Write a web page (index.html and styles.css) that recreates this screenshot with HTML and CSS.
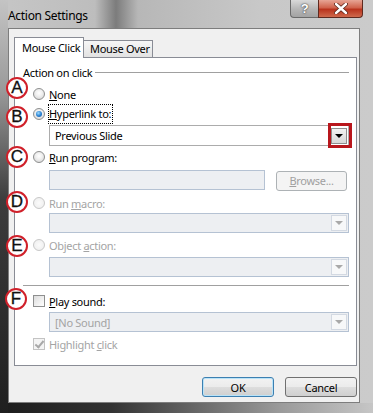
FILE: index.html
```html
<!DOCTYPE html>
<html lang="en">
<head>
  <meta charset="UTF-8">
  <title>Action Settings</title>
  <link rel="stylesheet" href="styles.css">
</head>
<body>
  <div class="window">
    <div class="titlebar">
      <span class="title">Action Settings</span>
      <div class="caption-btns">
        <span class="cap help">?</span>
        <span class="cap close">
          <svg width="14" height="11" viewBox="0 0 14 11"><path d="M2 1 L12 10 M12 1 L2 10" stroke="#5b2418" stroke-width="4" stroke-linecap="round"/><path d="M2 1 L12 10 M12 1 L2 10" stroke="#fff" stroke-width="2.4" stroke-linecap="round"/></svg>
        </span>
      </div>
    </div>

    <div class="client">
      <div class="tabs">
        <div class="tab active">Mouse Click</div>
        <div class="tab">Mouse Over</div>
      </div>

      <div class="panel">
        <div class="group-head"><span>Action on click</span><span class="rule"></span></div>

        <div class="row row-a"><span class="radio"></span><span><u>N</u>one</span></div>
        <div class="row row-b"><span class="radio checked"></span><span class="focus"><u>H</u>yperlink to:</span></div>
        <div class="field combo combo-main">
          <span>Previous Slide</span>
          <span class="drop"><i class="tri"></i></span>
        </div>

        <div class="row row-c"><span class="radio"></span><span><u>R</u>un program:</span></div>
        <div class="field-line">
          <div class="field text disabled"></div>
          <span class="btn browse"><u>B</u>rowse...</span>
        </div>

        <div class="row row-d disabled"><span class="radio"></span><span>Run <u>m</u>acro:</span></div>
        <div class="field combo disabled combo-macro"><span class="drop"><i class="tri"></i></span></div>

        <div class="row row-e disabled"><span class="radio"></span><span>Object <u>a</u>ction:</span></div>
        <div class="field combo disabled combo-obj"><span class="drop"><i class="tri"></i></span></div>

        <div class="sep"></div>

        <div class="row row-f"><span class="check"></span><span><u>P</u>lay sound:</span></div>
        <div class="field combo disabled combo-sound"><span>[No Sound]</span><span class="drop"><i class="tri"></i></span></div>

        <div class="row row-g disabled"><span class="check checked"></span><span>Highlight <u>c</u>lick</span></div>
      </div>

      <div class="buttons">
        <span class="btn default">OK</span>
        <span class="btn">Cancel</span>
      </div>
    </div>

    <span class="badge badge-a">A</span>
    <span class="badge badge-b">B</span>
    <span class="badge badge-c">C</span>
    <span class="badge badge-d">D</span>
    <span class="badge badge-e">E</span>
    <span class="badge badge-f">F</span>
    <span class="highlight-box"></span>
  </div>
</body>
</html>
```

FILE: styles.css
```css
body {
  margin: 0;
  font-family: "Noto Sans", "Open Sans", sans-serif;
  font-size: 11px;
  letter-spacing: -0.3px;
  color: #000;
}
.window {
  position: relative;
  width: 373px;
  height: 413px;
  overflow: hidden;
  background:
    linear-gradient(180deg, #c4c4c4 0, #9a9a9a 90px, #3c3c3c 200px, #1f1f1f 100%) left top / 8px 100% no-repeat,
    linear-gradient(90deg, #1c1c1c 0, #333 30%, #9a9a9a 75%, #c6c6c6 100%) left bottom / 100% 10px no-repeat,
    linear-gradient(90deg, #c6c6c6 0, #bdbdbd 95px, #7c7c7c 116px, #b7b7b7 138px, #c8c8c8 260px, #cbcbcb 100%);
}
.titlebar {
  height: 28px;
  display: flex;
  justify-content: space-between;
  align-items: flex-start;
}
.title {
  margin: 7px 0 0 8px;
  font-size: 12px;
}
.caption-btns {
  display: flex;
  margin-right: 10px;
}
.cap {
  height: 18px;
  display: flex;
  align-items: center;
  justify-content: center;
  box-sizing: border-box;
  border: 1px solid #6a6a6a;
  border-top: none;
}
.help {
  width: 28px;
  border-right: none;
  border-radius: 0 0 0 4px;
  background: linear-gradient(180deg, #d9d9d9, #b5b5b5 55%, #a3a3a3);
  color: #fff;
  font: bold 13px "Liberation Sans", sans-serif;
  text-shadow: 0 0 2px #444, 0 0 1px #444;
}
.close {
  width: 45px;
  border-color: #5f2a20;
  border-radius: 0 0 4px 0;
  background: linear-gradient(180deg, #e7a595, #d0634d 45%, #b9331d 55%, #cf6a4d);
}
.client {
  box-sizing: border-box;
  width: 352px;
  height: 375px;
  margin-left: 8px;
  padding: 8px 2px 0 5px;
  border: 1px solid #7d7d7d;
  background: #f0f0f0;
  display: flex;
  flex-direction: column;
}
.tabs {
  display: flex;
  align-items: flex-end;
  position: relative;
  z-index: 1;
}
.tab {
  box-sizing: border-box;
  height: 17px;
  padding: 0 0 0 6px;
  border: 1px solid #898c95;
  border-bottom: none;
  background: linear-gradient(180deg, #f6f6f6, #e2e2e2);
  line-height: 16px;
  white-space: nowrap;
}
.tab.active {
  height: 21px;
  width: 70px;
  padding: 2px 0 0 7px;
  background: #fff;
  margin-bottom: -1px;
}
.tab + .tab {
  margin-left: -1px;
  width: 70px;
}
.panel {
  box-sizing: border-box;
  height: 309px;
  border: 1px solid #898c95;
  background: #fff;
  padding: 6px 7px 0 8px;
}
.group-head {
  height: 16px;
  display: flex;
  align-items: center;
}
.group-head .rule {
  flex: 1;
  height: 1px;
  margin-left: 3px;
  background: #a0a0a0;
}
.row {
  height: 18px;
  display: flex;
  align-items: center;
  padding-left: 10px;
}
.row-a { margin-top: 5px; }
.row-b, .row-c { margin-top: 2px; }
.row-d { margin-top: 4px; }
.row-e { margin-top: 3px; }
.row-f { margin-top: 6px; }
.row-g { margin-top: 3px; }
.disabled { color: #a4a4a4; }
u { text-decoration: underline; text-underline-offset: 1px; }
.radio {
  width: 12px;
  height: 12px;
  box-sizing: border-box;
  border-radius: 50%;
  border: 1px solid #8e8f8f;
  background: radial-gradient(circle at 50% 40%, #fff 0, #f0f0f0 40%, #cfcfcf 100%);
  margin-right: 4px;
  display: flex;
  align-items: center;
  justify-content: center;
}
.radio.checked::after {
  content: "";
  width: 6px;
  height: 6px;
  border-radius: 50%;
  background: radial-gradient(circle at 40% 35%, #9fdcff 0, #2f86d5 50%, #124f9a 100%);
}
.row.disabled .radio {
  border-color: #c8c8c8;
  background: radial-gradient(circle, #fbfbfb, #ececec);
}
.focus {
  outline: 1px dotted #000;
  outline-offset: 0;
  padding: 1px 1px 2px 0;
}
.check {
  width: 12px;
  height: 12px;
  box-sizing: border-box;
  border: 1px solid #8e8f8f;
  background: linear-gradient(135deg, #dcdcdc, #fff);
  margin-right: 4px;
  display: flex;
  align-items: center;
  justify-content: center;
}
.check.checked {
  border-color: #c3c3c3;
  background: #f4f4f4;
}
.check.checked::after {
  content: "";
  width: 3px;
  height: 7px;
  margin-top: -2px;
  border: solid #a8a8a8;
  border-width: 0 2px 2px 0;
  transform: rotate(40deg);
}
.field {
  box-sizing: border-box;
  height: 20px;
  margin-left: 26px;
  border: 1px solid #acacac;
  background: #fff;
  display: flex;
  align-items: center;
  padding-left: 5px;
}
.field.disabled {
  border-color: #b5c2d3;
  background: #edeff2;
}
.combo { padding-right: 1px; }
.combo-main { height: 21px; margin-top: 2px; }
.combo-macro { margin-top: 1px; }
.combo-obj { margin-top: 3px; }
.combo-sound { margin-top: 2px; }
.drop {
  box-sizing: border-box;
  width: 16px;
  height: 16px;
  margin-left: auto;
  border: 1px solid #8f8f8f;
  background: linear-gradient(180deg, #f2f2f2, #d8d8d8);
  display: flex;
  align-items: center;
  justify-content: center;
}
.tri {
  width: 0;
  height: 0;
  border: 4px solid transparent;
  border-top: 4px solid #000;
  border-bottom: none;
}
.field.disabled .drop {
  border-color: #d3d9e2;
  background: #f7f8f9;
}
.field.disabled .tri { border-top-color: #a9a9a9; }
.field-line {
  display: flex;
  align-items: center;
  margin-top: 3px;
  height: 21px;
}
.field.text { width: 216px; }
.btn {
  box-sizing: border-box;
  display: flex;
  align-items: center;
  justify-content: center;
  border: 1px solid #707070;
  border-radius: 3px;
  background: linear-gradient(180deg, #f2f2f2 0, #ebebeb 50%, #dddddd 51%, #cfcfcf 100%);
}
.browse {
  width: 71px;
  height: 20px;
  margin: 2px 0 0 11px;
  border-color: #adb2b5;
  background: #f4f4f4;
  color: #a0a0a0;
}
.sep {
  height: 1px;
  margin: 8px 0 0 0;
  background: #a0a0a0;
}
.buttons {
  display: flex;
  justify-content: flex-end;
  gap: 11px;
  margin-top: 11px;
}
.buttons .btn {
  width: 72px;
  height: 20px;
}
.btn.default {
  border-color: #3c7fb1;
  box-shadow: inset 0 0 0 1px #b9e3f8;
}
.badge {
  position: absolute;
  left: 6px;
  width: 22px;
  height: 22px;
  box-sizing: border-box;
  border: 2px solid #d0202a;
  border-radius: 50%;
  background: #fff;
  font: 17px/18px "Liberation Sans", sans-serif;
  letter-spacing: 0;
  text-align: center;
  color: #111;
  -webkit-text-stroke: 0.3px #111;
}
.badge-a { top: 77px; }
.badge-b { top: 106px; }
.badge-c { top: 146px; }
.badge-d { top: 191px; }
.badge-e { top: 235px; }
.badge-f { top: 288px; left: 5px; }
.highlight-box {
  position: absolute;
  left: 328px;
  top: 123px;
  width: 24px;
  height: 25px;
  box-sizing: border-box;
  border: 3px solid #b8161c;
}
```
